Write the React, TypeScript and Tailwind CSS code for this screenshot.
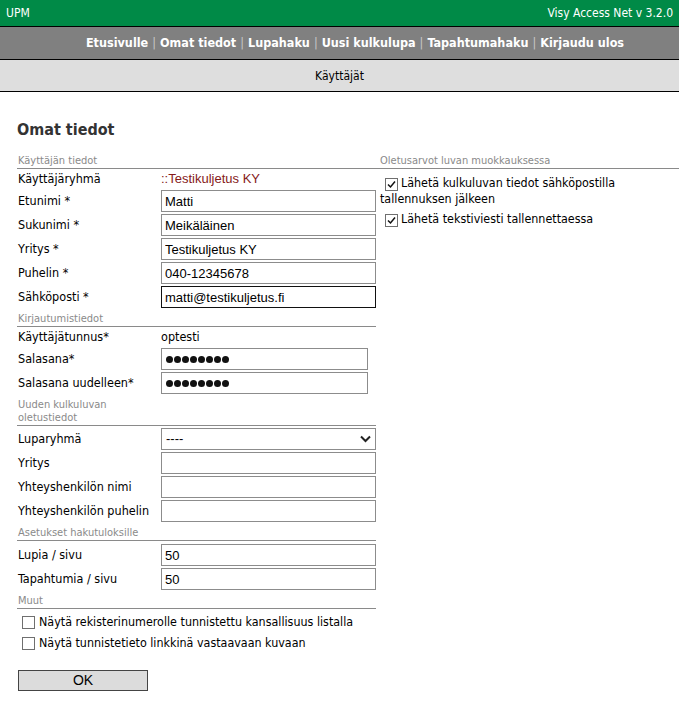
import React from "react"

const tah = { fontFamily: '"DejaVu Sans Condensed", "DejaVu Sans", sans-serif' }
const ari = { fontFamily: '"Liberation Sans", Arial, sans-serif' }

function Box({ checked }: { checked?: boolean }) {
  return (
    <span className="inline-flex w-[13px] h-[13px] border border-[#6f6f6f] bg-white items-center justify-center align-[-2px]">
      {checked && (
        <svg width="9" height="9" viewBox="0 0 9 9">
          <path d="M1 4.5 L3.5 7 L8 1.5" fill="none" stroke="#111" strokeWidth="1.5" />
        </svg>
      )}
    </span>
  )
}

function SectionHead({ children, first }: { children: React.ReactNode; first?: boolean }) {
  return (
    <div
      className={`${first ? "pt-0" : "pt-[3px]"} pb-[1px] pl-px text-[11px] leading-[13px] text-[#8a8a8a] border-b border-[#8a8a8a]`}
      style={tah}
    >
      {children}
    </div>
  )
}

function TextRow({ label, value }: { label: string; value: string }) {
  return (
    <div className="flex items-center h-[20px] text-[12.5px] text-black" style={tah}>
      <div className="w-[144px] pl-px">{label}</div>
      <div>{value}</div>
    </div>
  )
}

function InputRow({
  label,
  value = "",
  w = "w-[215px]",
  dark,
}: {
  label: string
  value?: string
  w?: string
  dark?: boolean
}) {
  return (
    <div className="flex items-center h-[24px]">
      <div className="w-[144px] pl-px text-[12.5px] text-black" style={tah}>
        {label}
      </div>
      <input
        defaultValue={value}
        className={`${w} h-[22px] border ${dark ? "border-[#111]" : "border-[#8c8c8c]"} bg-white px-[3px] text-[13px] text-black outline-none`}
        style={ari}
      />
    </div>
  )
}

function PassRow({ label }: { label: string }) {
  return (
    <div className="flex items-center h-[24px]">
      <div className="w-[144px] pl-px text-[12.5px] text-black" style={tah}>
        {label}
      </div>
      <div className="w-[207px] h-[22px] border border-[#8c8c8c] bg-white pl-[4px] flex items-center gap-[1px]">
        {[0, 1, 2, 3, 4, 5, 6, 7].map((i) => (
          <span key={i} className="w-[7px] h-[7px] rounded-full bg-[#111]" />
        ))}
      </div>
    </div>
  )
}

export default function App() {
  const nav = ["Etusivulle", "Omat tiedot", "Lupahaku", "Uusi kulkulupa", "Tapahtumahaku", "Kirjaudu ulos"]
  return (
    <div className="w-[679px] min-h-[703px] bg-white">
      {/* top bar */}
      <div
        className="h-[27px] bg-[#008a47] border-b border-black flex items-center justify-between px-[6px] text-[12px] text-white"
        style={tah}
      >
        <span>UPM</span>
        <span>Visy Access Net v 3.2.0</span>
      </div>
      <div
        className="h-[33px] bg-[#808080] border-b border-black flex items-center justify-center pl-[31px] text-[12.5px] font-bold text-white"
        style={tah}
      >
        {nav.map((n, i) => (
          <React.Fragment key={n}>
            {i > 0 && <span className="text-[#c8c8c8] font-normal px-[4px]">|</span>}
            <span>{n}</span>
          </React.Fragment>
        ))}
      </div>
      <div
        className="h-[32px] bg-[#dedede] border-b border-black flex items-center justify-center text-[12px] text-black"
        style={tah}
      >
        Käyttäjät
      </div>

      <div className="pl-[17px]">
        <h1 className="pt-[28px] h-[62px] text-[16px] leading-[20px] font-bold text-[#333]" style={tah}>
          Omat tiedot
        </h1>

        <div className="flex">
          {/* left column */}
          <div className="w-[359px]">
            <SectionHead first>Käyttäjän tiedot</SectionHead>
            <TextRow label="Käyttäjäryhmä" value="" />
            <div className="flex items-center h-[20px] -mt-[20px] pl-[144px] text-[13px] text-[#861a1a]" style={ari}>
              ::Testikuljetus KY
            </div>
            <InputRow label="Etunimi *" value="Matti" />
            <InputRow label="Sukunimi *" value="Meikäläinen" />
            <InputRow label="Yritys *" value="Testikuljetus KY" />
            <InputRow label="Puhelin *" value="040-12345678" />
            <InputRow label="Sähköposti *" value="matti@testikuljetus.fi" dark />

            <SectionHead>Kirjautumistiedot</SectionHead>
            <TextRow label="Käyttäjätunnus*" value="optesti" />
            <PassRow label="Salasana*" />
            <PassRow label="Salasana uudelleen*" />

            <SectionHead>
              Uuden kulkuluvan
              <br />
              oletustiedot
            </SectionHead>
            <div className="flex items-center h-[24px] mt-px">
              <div className="w-[144px] pl-px text-[12.5px] text-black" style={tah}>
                Luparyhmä
              </div>
              <div className="w-[215px] h-[22px] border border-[#8c8c8c] bg-white flex items-center justify-between pl-[4px] pr-[4px]">
                <span className="text-[13px] text-black" style={ari}>
                  ----
                </span>
                <svg width="11" height="8" viewBox="0 0 11 8">
                  <path d="M1 1.5 L5.5 6 L10 1.5" fill="none" stroke="#222" strokeWidth="2" />
                </svg>
              </div>
            </div>
            <InputRow label="Yritys" />
            <InputRow label="Yhteyshenkilön nimi" />
            <InputRow label="Yhteyshenkilön puhelin" />

            <SectionHead>Asetukset hakutuloksille</SectionHead>
            <div className="pt-[2px]">
              <InputRow label="Lupia / sivu" value="50" />
              <InputRow label="Tapahtumia / sivu" value="50" />
            </div>

            <SectionHead>Muut</SectionHead>
            <div className="pt-[3px] pl-[5px] text-[12.4px] text-black" style={tah}>
              <div className="h-[21px] flex items-center gap-[4px]">
                <Box />
                <span>Näytä rekisterinumerolle tunnistettu kansallisuus listalla</span>
              </div>
              <div className="h-[21px] flex items-center gap-[4px]">
                <Box />
                <span>Näytä tunnistetieto linkkinä vastaavaan kuvaan</span>
              </div>
            </div>

            <button
              className="mt-[16px] ml-px w-[130px] h-[21px] bg-[#dcdcdc] border border-[#444] text-[14px] text-black leading-[19px]"
              style={ari}
            >
              OK
            </button>
          </div>

          {/* right column */}
          <div className="flex-1">
            <SectionHead first>
              <span className="pl-[3px]">Oletusarvot luvan muokkauksessa</span>
            </SectionHead>
            <div className="pl-[4px] pt-[6px] text-[12.4px] leading-[16px] text-black" style={tah}>
              <div>
                <span className="ml-[5px] mr-[3px]">
                  <Box checked />
                </span>
                Lähetä kulkuluvan tiedot sähköpostilla tallennuksen jälkeen
              </div>
              <div className="mt-[4px]">
                <span className="ml-[5px] mr-[3px]">
                  <Box checked />
                </span>
                Lähetä tekstiviesti tallennettaessa
              </div>
            </div>
          </div>
        </div>
      </div>
    </div>
  )
}
